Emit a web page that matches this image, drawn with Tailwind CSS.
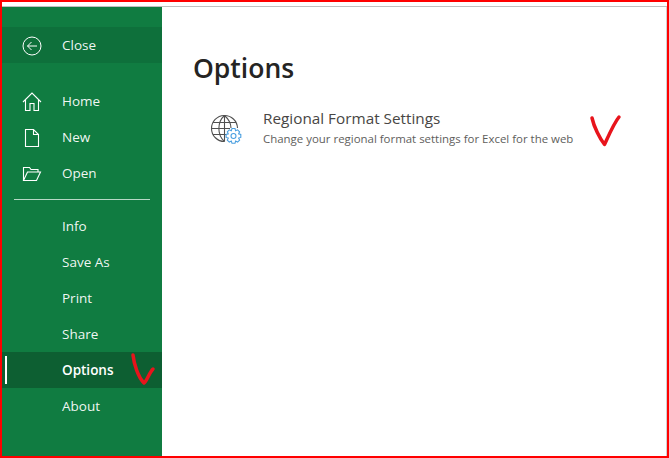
<!DOCTYPE html>
<html lang="en">
<head>
    <meta charset="UTF-8">
    <title>Options</title>
    <script src="https://cdn.jsdelivr.net/npm/@tailwindcss/browser@4"></script>
</head>
<body class="bg-white">
    <div class="relative w-[669px] h-[458px] overflow-hidden border-2 border-[#ff0000] bg-white font-['Open_Sans',sans-serif]">
        <div class="h-[5px] border-b border-[#c0c0c0]"></div>
        <div class="flex h-[449px]">
            <!-- sidebar -->
            <nav class="w-[160px] shrink-0 bg-[#107c41] pt-5 text-[13.500px] font-medium text-white/95">
                <div class="flex h-9 items-center bg-[#0e703b] pt-px">
                    <span class="flex w-[60px] justify-center">
                        <svg width="20" height="20" viewBox="0 0 20 20" fill="none" stroke="white" stroke-width="1"><circle cx="10" cy="10" r="9"/><path d="M15 10H5.500M9.500 6l-4 4 4 4"/></svg>
                    </span>
                    <span>Close</span>
                </div>
                <div class="mt-5 flex h-9 items-center pt-px">
                    <span class="flex w-[60px] justify-center">
                        <svg width="20" height="20" viewBox="0 0 20 20" fill="none" stroke="white" stroke-width="1.100"><path d="M1 10 10 1l9 9M3.500 8v10.500h4.500v-7h4v7h4.500V8"/></svg>
                    </span>
                    <span>Home</span>
                </div>
                <div class="flex h-9 items-center pt-px">
                    <span class="flex w-[60px] justify-center">
                        <svg width="16" height="20" viewBox="0 0 16 20" fill="none" stroke="white" stroke-width="1.100"><path d="M1.500 1.500h8l5 5v12h-13zM9.500 1.500v5h5"/></svg>
                    </span>
                    <span>New</span>
                </div>
                <div class="flex h-9 items-center pt-px">
                    <span class="flex w-[60px] justify-center">
                        <svg width="20" height="16" viewBox="0 0 20 16" fill="none" stroke="white" stroke-width="1.100"><path d="M1.500 14.500V1.500h6l1.500 2h7v2.500M1.500 14.500h13l4-8.500H5.500z"/></svg>
                    </span>
                    <span>Open</span>
                </div>
                <div class="mx-3 mt-2 h-px bg-white/70"></div>
                <div class="mt-2 flex h-9 items-center pl-[60px] pt-px">Info</div>
                <div class="flex h-9 items-center pl-[60px] pt-px">Save As</div>
                <div class="flex h-9 items-center pl-[60px] pt-px">Print</div>
                <div class="flex h-9 items-center pl-[60px] pt-px">Share</div>
                <div class="relative flex h-9 items-center bg-[#0d5f32] pl-[60px] pt-px font-semibold text-white">
                    <span class="absolute left-[3px] top-[4px] h-7 w-0.5 bg-white"></span>
                    Options
                </div>
                <div class="flex h-9 items-center pl-[60px] pt-px">About</div>
            </nav>
            <!-- main -->
            <main class="flex-1 border-r border-[#d0d0d0] pl-[31px] pt-[43px]">
                <h1 class="text-[26.500px] leading-9 font-semibold text-[#252423]">Options</h1>
                <div class="mt-[22px] flex">
                    <span class="ml-[17px] mt-[6px] w-[53px] shrink-0">
                        <svg width="32" height="32" viewBox="0 0 32 32" fill="none">
                            <g stroke="#505050" stroke-width="1.100">
                                <path d="M14.500 27.500A13 13 0 1 1 27.500 14"/>
                                <path d="M14.500 1.500C7 8 7 21 14.500 27.500M14.500 1.500C19 5.500 21 10 21 14M14.500 1.500v26"/>
                                <path d="M3 8.500h23M1.500 14.500H20M3 20.500h14"/>
                            </g>
                            <path fill="white" stroke="#4a9fe0" stroke-width="1.100" d="M22 14.500h3l.6 2.200 2-.9 2 2-1 2 2.200.7v2.900l-2.200.7 1 2-2 2-2-1-.6 2.200h-3l-.7-2.200-2 1-2-2 1-2-2.200-.7v-2.900l2.200-.7-1-2 2-2 2 .9z"/>
                            <circle cx="23.500" cy="22" r="2.500" fill="white" stroke="#4a9fe0" stroke-width="1.100"/>
                        </svg>
                    </span>
                    <div>
                        <div class="text-[15.300px] leading-5 text-[#484644]">Regional Format Settings</div>
                        <div class="mt-[2px] text-[11.450px] leading-[18px] text-[#605e5c]">Change your regional format settings for Excel for the web</div>
                    </div>
                </div>
            </main>
        </div>
        <!-- red ticks drawn on top of the screenshot -->
        <svg class="absolute left-[584px] top-[111px]" width="36" height="36" viewBox="0 0 36 36" fill="none" stroke="#e8141c" stroke-width="3.500" stroke-linecap="round" stroke-linejoin="round"><path d="M6 5C8 14 14 26 18.500 31.500C22 24 28 10 33 4"/></svg>
        <svg class="absolute left-[128px] top-[350px]" width="28" height="36" viewBox="0 0 28 36" fill="none" stroke="#e8141c" stroke-width="3.500" stroke-linecap="round" stroke-linejoin="round"><path d="M3 3C4 12 8 25 14 31C17 29 19 21 23 17"/></svg>
    </div>
</body>
</html>
